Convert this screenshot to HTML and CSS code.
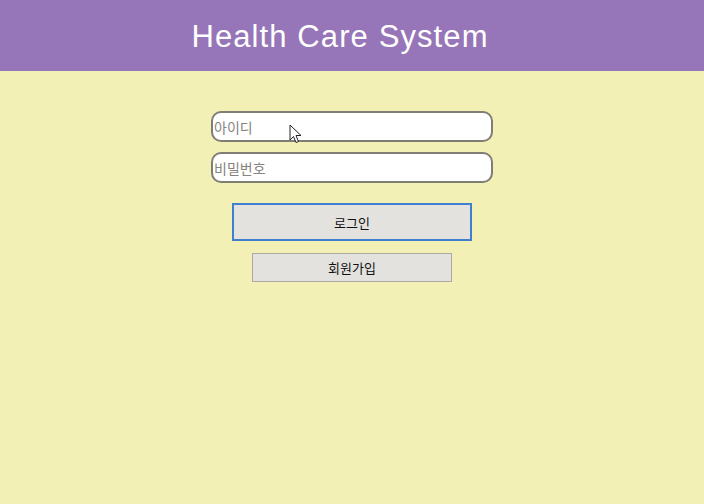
FILE: index.html
```html
<!DOCTYPE html>
<html lang="ko">
<head>
<meta charset="utf-8">
<title>Health Care System</title>
<link rel="stylesheet" href="styles.css">
</head>
<body>
<header class="top">
  <h1 class="title">Health Care System</h1>
</header>
<main class="login">
  <form class="form">
    <div class="field">
      <input class="input" type="text" placeholder="아이디">
      <svg class="cursor" width="14" height="21" viewBox="0 0 14 21"><path d="M1 1 L1 16 L4.5 12.5 L7 18.5 L9.5 17.5 L7 11.5 L12 11.5 Z" fill="#fff" stroke="#222" stroke-width="1"/></svg>
    </div>
    <input class="input" type="password" placeholder="비밀번호">
    <button class="btn btn-login" type="button">로그인</button>
    <button class="btn btn-join" type="button">회원가입</button>
  </form>
</main>
</body>
</html>
```
FILE: styles.css
```css
html, body {
  margin: 0;
  padding: 0;
}
body {
  width: 704px;
  height: 504px;
  background: #f2f0b4;
  font-family: "Noto Sans CJK KR", "Liberation Sans", sans-serif;
  overflow: hidden;
}
.top {
  height: 71px;
  background: #9676b8;
  display: flex;
  align-items: center;
  justify-content: center;
}
.title {
  margin: 0 0 0 -24px;
  color: #fff;
  font-family: "Liberation Sans", Arial, sans-serif;
  font-weight: normal;
  font-size: 31px;
  letter-spacing: 1.1px;
  line-height: 1;
  padding-top: 2px;
}
.login {
  display: flex;
  justify-content: center;
  padding-top: 40px;
}
.form {
  width: 282px;
  display: flex;
  flex-direction: column;
  align-items: center;
}
.field {
  position: relative;
}
.cursor {
  position: absolute;
  left: 78px;
  top: 13px;
}
.input {
  box-sizing: border-box;
  width: 282px;
  height: 31px;
  margin: 0 0 10px 0;
  border: 2px solid #7f7d76;
  border-radius: 10px;
  background: #fff;
  padding: 0 0 0 1px;
  font-family: "Noto Sans CJK KR", sans-serif;
  font-size: 14px;
  outline: none;
}
.input::placeholder {
  color: #86847c;
}
.btn {
  box-sizing: border-box;
  background: #e3e2df;
  font-family: "Noto Sans CJK KR", sans-serif;
  font-size: 13px;
  color: #111;
  padding: 0;
}
.btn-login {
  width: 240px;
  height: 38px;
  margin-top: 10px;
  border: 2px solid #3f7fcf;
}
.btn-join {
  width: 200px;
  height: 29px;
  margin-top: 12px;
  border: 1px solid #aaa9a2;
}
```
